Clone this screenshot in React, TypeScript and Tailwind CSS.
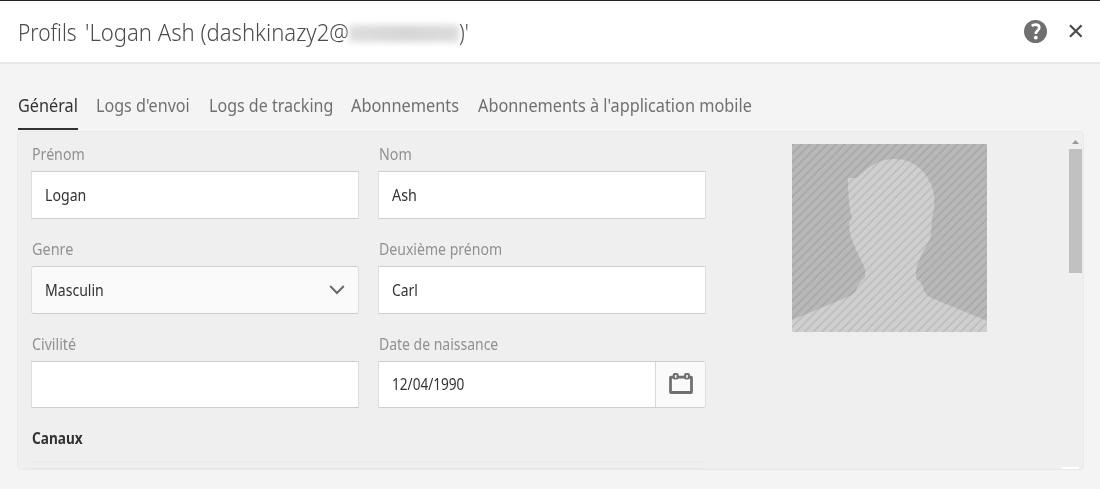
import React, { useLayoutEffect, useRef, useState } from "react";

/* Text condensed or widened horizontally to fill a given width. */
function Fit({ w, children }: { w: number; children: string }) {
  const ref = useRef<HTMLSpanElement>(null);
  const [scale, setScale] = useState(1);
  useLayoutEffect(() => {
    if (ref.current) setScale(w / ref.current.offsetWidth);
  }, [w]);
  return (
    <span className="block shrink-0" style={{ width: w }}>
      <span ref={ref} className="inline-block origin-left whitespace-nowrap" style={{ transform: `scaleX(${scale})` }}>
        {children}
      </span>
    </span>
  );
}

function Field({ label, w, children }: { label: string; w: number; children: React.ReactNode }) {
  return (
    <div className="flex h-[95px] w-[328px] flex-col">
      <div className="h-[28px] pl-[0.5px] text-[15.5px] leading-[22px] text-[#919191]">
        <Fit w={w}>{label}</Fit>
      </div>
      {children}
    </div>
  );
}

function Input({ value, w, short }: { value?: string; w?: number; short?: boolean }) {
  return (
    <div
      className={`${short ? "h-[47px]" : "h-[48px]"} flex items-center border border-x-[#dedede] border-y-[#cecece] bg-white pt-px pl-[13px] text-[15.5px] text-[#323232]`}
    >
      {value && <Fit w={w ?? 0}>{value}</Fit>}
    </div>
  );
}

function Avatar() {
  return (
    <svg width="195" height="188" viewBox="0 0 195 188">
      <defs>
        <pattern id="stripes" width="8.67" height="8.67" patternUnits="userSpaceOnUse" patternTransform="translate(1 0)">
          <path d="M-1 9.67L9.67 -1M-1 1L1 -1M7.67 9.67L9.67 7.67" stroke="#000" strokeOpacity=".11" strokeWidth="1.3" />
        </pattern>
      </defs>
      <rect width="195" height="188" fill="#b8b8b8" />
      <path
        d="M0 176L36 161L58 152C63 149 65 146 66 141L69 137L73 133V125C68 114 60 98 58 89L57 79L60 74C57 64 56 49 56 34H65C75 24 86 15 102 15C121 15 132 26 138 38C142 45 143 55 142 65L140 75C139 82 140 92 137 97L133 104C129 112 124 121 124 129V134L130 140L132 147C134 151 137 153 142 155L195 177V188H0Z"
        fill="#cfcfcf"
      />
      <rect width="195" height="188" fill="url(#stripes)" />
    </svg>
  );
}

const tabs = [
  { label: "Général", w: 59.5, active: true },
  { label: "Logs d'envoi", w: 94 },
  { label: "Logs de tracking", w: 124 },
  { label: "Abonnements", w: 108 },
  { label: "Abonnements à l'application mobile", w: 274 },
];

export default function App() {
  return (
    <div className="flex h-[489px] w-[1100px] flex-col overflow-hidden bg-[#f4f4f4] font-['Noto_Sans',sans-serif] whitespace-nowrap">
      <header className="flex h-[64px] shrink-0 items-center justify-between border-t border-b-2 border-t-[#222] border-b-[#e8e8e8] bg-white pr-[16px] pl-[18px]">
        <h1 className="flex items-center text-[24.5px] leading-[30px] font-light text-[#4b4b4b]">
          <Fit w={59}>Profils</Fit>
          <span className="ml-[8px]">
            <Fit w={264}>'Logan Ash (dashkinazy2@</Fit>
          </span>
          <span className="mt-[3px] h-[17px] w-[110px] bg-linear-to-r from-[#dedede] via-[#d6d6d6] to-[#dcdcdc] blur-[3px]" />
          <Fit w={10}>)'</Fit>
        </h1>
        <div className="flex items-center gap-[21px]">
          <svg width="24" height="23" viewBox="0 0 24 23">
            <circle cx="12.5" cy="11.5" r="11.5" fill="#707070" />
            <path d="M8.8 6C10 4.8 11.2 4.6 12.6 4.6C15.2 4.6 16.3 6 16.3 7.7C16.3 10.4 12.8 10.7 12.8 13.9" fill="none" stroke="#fff" strokeWidth="2.6" />
            <circle cx="12.8" cy="17.6" r="1.9" fill="#fff" />
          </svg>
          <svg width="16" height="16" viewBox="0 0 16 16" fill="none" stroke="#4b4b4b" strokeWidth="2.2">
            <path d="M2 1.2L13.6 12.8M13.6 1.2L2 12.8" />
          </svg>
        </div>
      </header>
      <nav className="flex h-[67px] shrink-0 items-end gap-[18.5px] pb-[1px] pl-[18px]">
        {tabs.map((t) => (
          <div
            key={t.label}
            className={`h-[37px] border-b-2 text-[18px] leading-[24px] ${t.active ? "border-[#323232] text-[#323232]" : "border-transparent text-[#707070]"}`}
          >
            <Fit w={t.w}>{t.label}</Fit>
          </div>
        ))}
      </nav>
      <main className="ml-[17px] flex h-[339px] w-[1067px] shrink-0 overflow-hidden rounded border border-[#e9e9e9] bg-[#efefef]">
        <div className="w-[774px] shrink-0 pt-[11px] pl-[13px]">
          <div className="grid grid-cols-[347px_328px]">
            <Field label="Prénom" w={53}><Input value="Logan" w={41} /></Field>
            <Field label="Nom" w={33}><Input value="Ash" w={25} /></Field>
            <Field label="Genre" w={41}>
              <div className="flex h-[48px] items-center justify-between rounded-[3px] border border-x-[#dedede] border-y-[#cecece] bg-[#fafafa] pr-[13px] pl-[13px] text-[15.5px] text-[#323232]">
                <div className="pt-px">
                  <Fit w={59}>Masculin</Fit>
                </div>
                <svg width="16" height="10" viewBox="0 0 16 10" fill="none" stroke="#6a6a6a" strokeWidth="2">
                  <path d="M1.2 1L8 8L14.8 1" />
                </svg>
              </div>
            </Field>
            <Field label="Deuxième prénom" w={123.5}><Input value="Carl" w={26} /></Field>
            <Field label="Civilité" w={44}><Input short /></Field>
            <Field label="Date de naissance" w={119}>
              <div className="flex h-[47px] items-stretch overflow-hidden rounded-r-[3px] border border-x-[#dedede] border-y-[#cecece] bg-white text-[15.5px] text-[#323232]">
                <div className="flex flex-1 items-center pl-[13px]">
                  <Fit w={72}>12/04/1990</Fit>
                </div>
                <div className="flex w-[50px] items-center justify-center border-l border-[#d8d8d8] bg-[#fafafa] pb-[3px]">
                  <svg width="24" height="21" viewBox="0 0 24 21">
                    <rect x="1.5" y="4.2" width="21" height="15.3" rx="0.5" fill="none" stroke="#707070" strokeWidth="2.8" />
                    <rect x="3.7" y="0" width="6" height="6.5" rx="2" fill="#707070" />
                    <rect x="15" y="0" width="6" height="6.5" rx="2" fill="#707070" />
                    <rect x="5.9" y="2" width="1.6" height="2.8" fill="#fafafa" />
                    <rect x="17.2" y="2" width="1.6" height="2.8" fill="#fafafa" />
                  </svg>
                </div>
              </div>
            </Field>
          </div>
          <div className="h-[34px] w-[674px] border-b border-[#e9e9e9] pl-[0.5px] text-[15.5px] leading-[20px] font-bold text-[#323232]">
            <Fit w={51}>Canaux</Fit>
          </div>
          <div className="mt-[6px] h-[1px] w-[672px] bg-[#e4e4e4]" />
        </div>
        <div className="w-[270px] shrink-0 pt-[12px]">
          <Avatar />
        </div>
        <div className="flex w-[20px] shrink-0 flex-col items-end pt-[8px]">
          <svg className="mr-[3px]" width="7" height="4" viewBox="0 0 7 4"><path d="M0 4L3.5 0L7 4Z" fill="#999" /></svg>
          <div className="mt-[5px] h-[124px] w-[13px] shrink-0 bg-[#c1c1c1]" />
          <div className="mt-auto h-[2px] w-[17px] shrink-0 self-start bg-white" />
        </div>
      </main>
    </div>
  );
}
